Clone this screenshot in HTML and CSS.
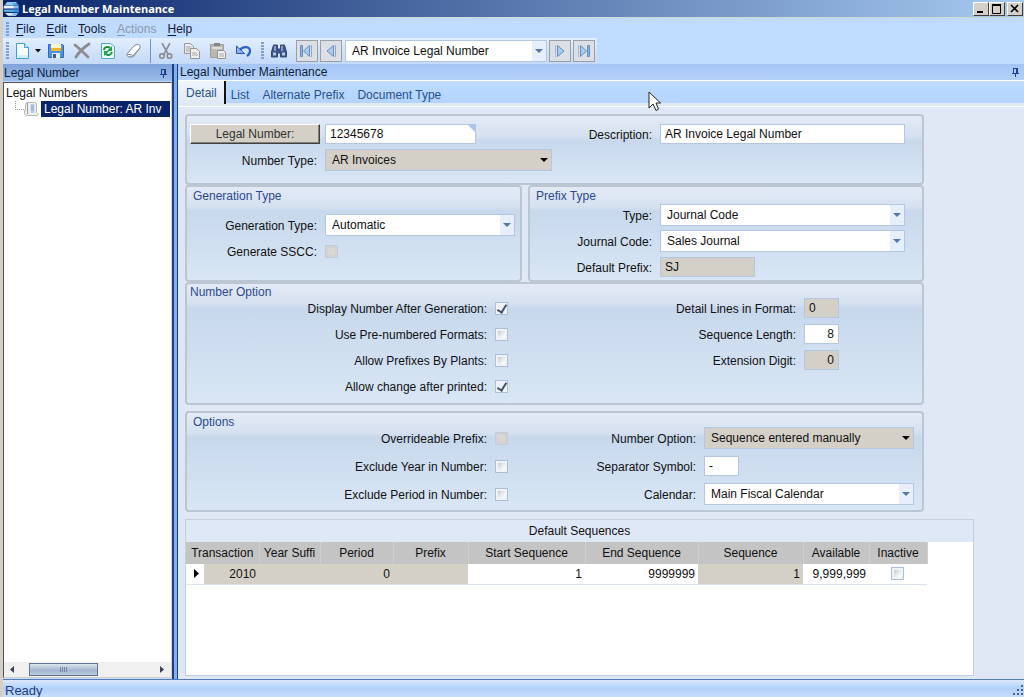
FILE: index.html
```html
<!DOCTYPE html>
<html lang="en">
<head>
<meta charset="utf-8">
<title>Legal Number Maintenance</title>
<link rel="stylesheet" href="styles.css">
</head>
<body>
<div class="window">
  <header class="titlebar">
    <svg class="logo" width="17" height="16" viewBox="0 0 17 16"><path d="M4 1h9l2 3H2z" fill="#8fd0f5"/><path d="M1 4.500h14.500v3H.500z" fill="#e4f5ff"/><path d="M.500 8.500h15.500v2.500H1z" fill="#57a8e4"/><path d="M2 12h13l-2 2.800H5z" fill="#d6f0ff"/><path d="M9 2h5l2 2v8l-2 2H9q4-6 0-12z" fill="#1f78cc" opacity=".45"/></svg>
    <h1>Legal Number Maintenance</h1>
    <div class="winbtns">
      <button type="button" aria-label="Minimize"><svg width="12" height="10"><path d="M2 8h6" stroke="#000" stroke-width="2"/></svg></button>
      <button type="button" aria-label="Maximize"><svg width="12" height="10"><path d="M1.500 1v8.500h8V1" fill="none" stroke="#000"/><path d="M1 1h9" stroke="#000" stroke-width="2"/></svg></button>
      <button type="button" class="close" aria-label="Close"><svg width="12" height="10"><path d="M2 1l7 7M9 1l-7 7" stroke="#000" stroke-width="1.600"/></svg></button>
    </div>
  </header>

  <nav class="menubar">
    <span class="grip"></span>
    <button type="button"><u>F</u>ile</button>
    <button type="button"><u>E</u>dit</button>
    <button type="button"><u>T</u>ools</button>
    <button type="button" disabled><u>A</u>ctions</button>
    <button type="button"><u>H</u>elp</button>
  </nav>

  <div class="toolrow">
    <div class="toolbar">
      <span class="grip"></span>
      <button type="button" class="tool" aria-label="New"><svg width="18" height="18"><path d="M3.500 1.500h8l4 4v11h-12z" fill="#f4fcff" stroke="#3aa0d8"/><path d="M11.500 1.500v4h4" fill="#c5e9f8" stroke="#3aa0d8"/><path d="M4.500 13h10v3h-10z" fill="#cdeefa"/></svg></button>
      <button type="button" class="drop" aria-label="New options"><svg width="6" height="4"><path d="M0 0h6L3 3.500z"/></svg></button>
      <button type="button" class="tool" aria-label="Save"><svg width="18" height="18"><path d="M1.500 2.500h14l1 1v12h-15z" fill="#4a93ea" stroke="#2f68bd"/><path d="M4 2h10v5H4z" fill="#fff4c4"/><path d="M4 6h10v3H4z" fill="#f2b52d"/><path d="M5 11h8v5H5z" fill="#e8edf5"/><path d="M6 12h3v4H6z" fill="#2e5db0"/></svg></button>
      <button type="button" class="tool gap" aria-label="Delete"><svg width="18" height="18"><path d="M2 3c5 4 9 8 13 12M16 2C10 6 6 10 3 15" fill="none" stroke="#8c8c8c" stroke-width="2.800" stroke-linecap="round"/></svg></button>
      <button type="button" class="tool gap" aria-label="Refresh"><svg width="18" height="18"><path d="M2.500 1.500h9l4 3v12h-13z" fill="#effcf3" stroke="#4aa8c8"/><path d="M5 8c0-3 4-4 6-2M13 10c-1 3-4 4-6 2" fill="none" stroke="#14913a" stroke-width="2"/><path d="M13 4v5H8zM5 14V9h5z" fill="#1ba544"/></svg></button>
      <button type="button" class="tool gap" aria-label="Clear"><svg width="18" height="18"><path d="M2 12L9 4q2-2 4.500-1.500Q16 3 15 6l-7 8q-1.500 1.500-4 1T2 12z" fill="#fff" stroke="#7d8590"/><path d="M3 12.500q4-1 5 1.500l7-8" fill="none" stroke="#7d8590"/><path d="M4 14.500l4 0 3-3" fill="none" stroke="#9aa3b2" stroke-width="1.500"/></svg></button>
      <span class="sep"></span>
      <button type="button" class="tool" aria-label="Cut"><svg width="18" height="18"><path d="M5 1l6 11M13 1L7 12" stroke="#8b8f96" stroke-width="1.600"/><circle cx="5" cy="14" r="2.300" fill="none" stroke="#888" stroke-width="1.500"/><circle cx="12.500" cy="14" r="2.300" fill="none" stroke="#888" stroke-width="1.500"/></svg></button>
      <button type="button" class="tool gap" aria-label="Copy"><svg width="18" height="18"><path d="M1.500 1.500h6l3 3v7h-9z" fill="#e7e7e7" stroke="#9b9b9b"/><path d="M3 5h5M3 7h5M3 9h5" stroke="#aaa"/><path d="M7.500 6.500h6l3 3v7h-9z" fill="#eee" stroke="#959595"/><path d="M9 11h5M9 13h6" stroke="#aaa"/></svg></button>
      <button type="button" class="tool gap" aria-label="Paste"><svg width="18" height="18"><path d="M1.500 2.500h13v13h-13z" fill="#bcb8b0" stroke="#a29f9a"/><path d="M5 1h6v3H5z" fill="#868686"/><path d="M3 5h10v2H3z" fill="#ddd"/><path d="M8.500 8.500h6l2 2v6h-8z" fill="#eee" stroke="#939393"/><path d="M10 12h5M10 14h5" stroke="#aaa"/></svg></button>
      <button type="button" class="tool gap" aria-label="Undo"><svg width="18" height="18"><path d="M5 8c3-4 10-4 10 1q0 3-3 5" fill="none" stroke="#2d60c4" stroke-width="2.200"/><path d="M1.500 4v7.500h8z" fill="#8db4f0" stroke="#2856b5"/></svg></button>
      <span class="grip second"></span>
      <button type="button" class="tool find" aria-label="Find"><svg width="18" height="18"><path d="M3.500 3h4v4h3V3h4l2 7v5h-6v-4h-3v4h-6v-5z" fill="#3f568d" stroke="#34487f"/><path d="M5 4v5M12 4v5" stroke="#d3def4"/><path d="M3 12h3M12 12h3" stroke="#b8c8e8" stroke-width="3"/></svg></button>
      <button type="button" class="nav" aria-label="First"><svg width="16" height="16"><path d="M1.500 2.500h2v11h-2z" fill="#8fb4dc" stroke="#6a8dbf"/><path d="M10.500 2.500v11L4.500 8z" fill="#a8cdec" stroke="#6a8dbf"/><path d="M12.500 2v12" stroke="#8aa7d0"/></svg></button>
      <button type="button" class="nav" aria-label="Previous"><svg width="16" height="16"><path d="M10.500 2.500v11L4 8z" fill="#a8cdec" stroke="#6a8dbf"/><path d="M12.500 2v12" stroke="#8aa7d0"/></svg></button>
      <label class="select jump"><select aria-label="Record"><option>AR Invoice Legal Number</option></select></label>
      <button type="button" class="nav" aria-label="Next"><svg width="16" height="16"><path d="M5.500 2.500v11L12 8z" fill="#a8cdec" stroke="#6a8dbf"/><path d="M3.500 2v12" stroke="#a3b8d5"/></svg></button>
      <button type="button" class="nav" aria-label="Last"><svg width="16" height="16"><path d="M4.500 2.500v11L10.500 8z" fill="#a8cdec" stroke="#6a8dbf"/><path d="M2.500 2v12" stroke="#a3b8d5"/><path d="M11.500 2.500h2v11h-2z" fill="#8fb4dc" stroke="#6a8dbf"/></svg></button>
    </div>
  </div>

  <div class="main">
    <aside class="side">
      <div class="panelhead"><h2>Legal Number</h2><svg class="pin" width="9" height="10"><path d="M2.500 1v5M6.500 1v5M2 1.500h5M1 6.500h7M4.500 7v3" stroke="#1d4489" fill="none"/><path d="M5.500 1v5" stroke="#1d4489"/></svg></div>
      <div class="tree">
        <ul>
          <li>Legal Numbers
            <ul>
              <li><svg width="27" height="16"><path d="M3.500 0v8.500H12" fill="none" stroke="#999" stroke-dasharray="1 1"/><path d="M13.500 3.500q0-2 2-2h7q2 0 2 2v8l2 2-1 1h-10q-3 0-3-2v-3h1z" fill="#f2f2f2" stroke="#b5b5b5"/><path d="M15.500 2v11" stroke="#999"/><path d="M18.500 3h4v9h-4z" fill="#c2d2ea"/><path d="M19 5h3M19 7h3M19 9h3" stroke="#8aa3cc"/></svg><span class="picked">Legal Number: AR Inv</span></li>
            </ul>
          </li>
        </ul>
        <div class="hscroll">
          <svg width="18" height="15"><path d="M11 4v7L7 7.500z" fill="#3a4458"/></svg>
          <span class="track"><span class="thumb"></span></span>
          <svg width="18" height="15"><path d="M7 4v7l4-3.500z" fill="#3a4458"/></svg>
        </div>
      </div>
    </aside>
    <div class="splitter"></div>

    <main class="detail">
      <div class="panelhead light"><h2>Legal Number Maintenance</h2><svg class="pin" width="9" height="10"><path d="M2.500 1v5M6.500 1v5M2 1.500h5M1 6.500h7M4.500 7v3" stroke="#1d4489" fill="none"/><path d="M5.500 1v5" stroke="#1d4489"/></svg></div>
      <nav class="tabs">
        <button type="button" class="on">Detail</button>
        <button type="button">List</button>
        <button type="button">Alternate Prefix</button>
        <button type="button">Document Type</button>
      </nav>
      <div class="sheet">
        <form class="forms">
          <section class="group">
            <div class="fields f-head">
              <button type="button" class="raised">Legal Number:</button>
              <span class="corner"><input type="text" value="12345678" aria-label="Legal Number"></span>
              <label for="desc">Description:</label>
              <input id="desc" type="text" value="AR Invoice Legal Number">
              <label for="ntype">Number Type:</label>
              <span class="select off"><select id="ntype" disabled><option>AR Invoices</option></select></span>
            </div>
          </section>
          <div class="pair">
            <section class="group">
              <h3>Generation Type</h3>
              <div class="fields f-gen">
                <label for="gtype">Generation Type:</label>
                <span class="select"><select id="gtype"><option>Automatic</option></select></span>
                <label for="sscc">Generate SSCC:</label>
                <input id="sscc" type="checkbox" disabled>
              </div>
            </section>
            <section class="group">
              <h3>Prefix Type</h3>
              <div class="fields f-prefix">
                <label for="ptype">Type:</label>
                <span class="select"><select id="ptype"><option>Journal Code</option></select></span>
                <label for="jcode">Journal Code:</label>
                <span class="select"><select id="jcode"><option>Sales Journal</option></select></span>
                <label for="dpre">Default Prefix:</label>
                <input id="dpre" class="mid" type="text" value="SJ" disabled>
              </div>
            </section>
          </div>
          <section class="group">
            <h3 class="near">Number Option</h3>
            <div class="fields f-number">
              <label for="c1">Display Number After Generation:</label><input id="c1" type="checkbox" checked>
              <label for="n1">Detail Lines in Format:</label><input id="n1" type="text" value="0" disabled>
              <label for="c2">Use Pre-numbered Formats:</label><input id="c2" type="checkbox">
              <label for="n2">Sequence Length:</label><input id="n2" class="num" type="text" value="8">
              <label for="c3">Allow Prefixes By Plants:</label><input id="c3" type="checkbox">
              <label for="n3">Extension Digit:</label><input id="n3" class="num" type="text" value="0" disabled>
              <label for="c4">Allow change after printed:</label><input id="c4" type="checkbox" checked>
            </div>
          </section>
          <section class="group last">
            <h3>Options</h3>
            <div class="fields f-options">
              <label for="o1">Overrideable Prefix:</label><input id="o1" type="checkbox" disabled>
              <label for="s1">Number Option:</label><span class="select off"><select id="s1" disabled><option>Sequence entered manually</option></select></span>
              <label for="o2">Exclude Year in Number:</label><input id="o2" type="checkbox">
              <label for="s2">Separator Symbol:</label><input id="s2" class="tiny" type="text" value="-">
              <label for="o3">Exclude Period in Number:</label><input id="o3" type="checkbox">
              <label for="s3">Calendar:</label><span class="select"><select id="s3"><option>Main Fiscal Calendar</option></select></span>
            </div>
          </section>
        </form>
        <section class="gridbox">
          <h3>Default Sequences</h3>
          <table>
            <colgroup><col class="w-sel"><col class="w-tran"><col class="w-year"><col class="w-per"><col class="w-pre"><col class="w-start"><col class="w-end"><col class="w-seq"><col class="w-av"><col class="w-in"></colgroup>
            <thead><tr><th colspan="2">Transaction</th><th>Year Suffi</th><th>Period</th><th>Prefix</th><th>Start Sequence</th><th>End Sequence</th><th>Sequence</th><th>Available</th><th>Inactive</th></tr></thead>
            <tbody><tr><td class="sel"><svg width="5" height="9"><path d="M0 0v9l5-4.500z"/></svg></td><td class="ro">2010</td><td class="ro"></td><td class="ro">0</td><td class="ro"></td><td>1</td><td>9999999</td><td class="ro">1</td><td>9,999,999</td><td class="mark"><input type="checkbox" aria-label="Inactive"></td></tr></tbody>
          </table>
        </section>
      </div>
    </main>
  </div>

  <footer class="status"><span>Ready</span><svg width="11" height="11"><path d="M8 0h2v2H8zM8 4h2v2H8zM4 4h2v2H4zM8 8h2v2H8zM4 8h2v2H4zM0 8h2v2H0z" fill="#4a648e"/></svg></footer>
  <svg class="cursor" width="13" height="21"><path d="M1 1v16l4-4 3 6.500 2.500-1.300L8 12h4.500z" fill="#fff" stroke="#222"/></svg>
</div>
</body>
</html>
```
FILE: styles.css
```css
* { box-sizing: border-box; }
body { margin: 0; font: 12px/16px "Liberation Sans", Arial, sans-serif; color: #111; }
h1, h2, h3, ul { margin: 0; padding: 0; font-size: 12px; font-weight: normal; list-style: none; }
button, input, select { font: inherit; color: inherit; margin: 0; padding: 0; border: 0; border-radius: 0; }
button { background: none; }
svg { display: block; flex: none; }

.window { position: relative; display: flex; flex-direction: column; height: 100vh; border-left: 3px solid #d4d0c8; background: #bfdbff; overflow: hidden; }

.titlebar { display: flex; align-items: center; height: 17px; flex: none; padding-right: 1px; background: linear-gradient(90deg, #0a246a, #a6caf0); color: #fff; }
.titlebar h1 { flex: 1; padding-left: 2px; font: bold 11px/16px "Open Sans", sans-serif; }
.winbtns { display: flex; }
.winbtns button { display: flex; align-items: center; justify-content: center; width: 16px; height: 14px; background: #d4d0c8; border: 1px solid; border-color: #fff #404040 #404040 #fff; }
.winbtns .close { margin-left: 2px; }

.menubar { display: flex; align-items: center; gap: 1px; height: 21px; flex: none; padding: 2px 0 0 3px; border-top: 1px solid #d4d6d8; }
.menubar button { padding: 0 5px; color: #10183a; }
.menubar .grip + button { margin-left: 1px; }
.menubar button:disabled { color: #8d97a8; }
u { text-underline-offset: 2px; }
.grip { width: 3px; height: 14px; flex: none; background: repeating-linear-gradient(#6f8fbe 0 2px, transparent 2px 3px); opacity: .8; }

.toolrow { height: 26px; flex: none; display: flex; }
.toolbar { display: flex; align-items: center; padding-left: 3px; background: linear-gradient(#e3efff, #cfe1f9 60%, #c3daf8); }
.toolbar .grip { height: 18px; }
.tool { width: 18px; height: 18px; flex: none; }
.tool.gap { margin-left: 8px; }
.grip + .tool { margin-left: 4px; }
.drop { margin: 0 6px 0 4px; }
.sep { width: 1px; height: 24px; margin: 0 6px 0 7px; background: #6f93c5; }
.toolbar .second { margin-left: 8px; }
.grip + .find { margin: 0 8px 0 6px; }
.nav { display: flex; align-items: center; justify-content: center; width: 22px; height: 22px; margin-right: 2px; background: #dcdfe5; border: 1px solid #9b9ea4; }
.jump { width: 202px; margin: 0 2px 0 1px; }

.main { display: flex; flex: 1; min-height: 0; }
.side { display: flex; flex-direction: column; width: 169px; flex: none; }
.panelhead { display: flex; align-items: center; height: 17px; flex: none; padding: 0 4px 0 1px; background: linear-gradient(#7fa3da, #9bbce9); }
.panelhead h2 { flex: 1; color: #0c1c3c; }
.panelhead.light { padding: 0 4px 0 2px; background: linear-gradient(#a6c5f5, #b3d0f8); border-bottom: 1px solid #fff; }
.tree { display: flex; flex-direction: column; justify-content: space-between; flex: 1; margin: 1px 0 1px; background: #fff; border: 1px solid #55524d; border-right-color: #d4d0c8; border-bottom-color: #d4d0c8; overflow: hidden; }
.tree > ul { padding: 2px 1px 2px 2px; white-space: nowrap; }
.tree li li { display: flex; padding-left: 7px; }
.picked { margin-left: 2px; padding: 0 3px; flex: 1; background: #0a246a; color: #fff; overflow: hidden; line-height: 17px; height: 16px; }
.tree svg { margin-left: -1px; }
.hscroll { display: flex; height: 15px; background: #f0f0f0; }
.track { flex: 1; padding: 1px 0; }
.thumb { display: block; width: 52%; height: 13px; margin-left: 6%; border: 1px solid #5f7590; background: repeating-linear-gradient(90deg, #7787a1 0 1px, transparent 1px 2px) center / 8px 5px no-repeat, linear-gradient(#dbe4f0, #a4b5cd 60%, #bccbe0); }
.splitter { width: 6px; flex: none; background: #86aee8; border: solid #17428b; border-width: 0 1px 0 2px; }

.detail { display: flex; flex-direction: column; flex: 1; min-width: 0; }
.tabs { display: flex; height: 26px; flex: none; padding-bottom: 3px; background: linear-gradient(#c0dbff, #b3d4fd 22px, #dfe8f4 22px); border-bottom: 1px solid #fff; }
.tabs button { padding: 6px 6px 0 7px; color: #28508f; }
.tabs .on { height: 23px; padding: 1px 7px 1px 8px; margin-right: -2px; background: linear-gradient(#f0f6ff, #dfe8f4); border-right: 2px solid #111; }

.sheet { display: flex; flex-direction: column; flex: 1; padding: 7px 50px 3px 7px; background: #dfe8f4; }
.forms { display: flex; flex-direction: column; margin-right: 50px; }
.group { border: 2px solid #bac6d1; border-radius: 4px; background: linear-gradient(#e3eaf5, #d5e1f0 20px, #c8d8ec 24px, #d8e6f5); }
.group h3 { height: 16px; margin-bottom: -6px; padding: 1px 6px 0; color: #2c4a92; }
.group .near { padding: 0 3px; }
.pair { display: grid; grid-template-columns: 337fr 396fr; gap: 6px; }
.group.last { margin-top: 6px; }

.fields { display: grid; grid-auto-rows: 26px; align-items: center; column-gap: 5px; padding-left: 3px; }
.fields label { text-align: right; padding: 2px 3px 0 0; white-space: nowrap; }
.f-head { grid-template-columns: 130px 227px 98px 1fr; padding: 5px 17px 10px 3px; }
.f-gen { grid-template-columns: 130px 1fr; padding: 15px 5px 15px 3px; }
.f-prefix { grid-template-columns: 125px 1fr; padding: 5px 17px 0 0; }
.f-number { grid-template-columns: 300px 13px 1fr 35px; padding: 1px 83px 4px 3px; }
.f-options { grid-template-columns: 300px 13px 1fr 210px; grid-auto-rows: 28px; padding: 1px 8px 2px 3px; }

input[type="text"] { width: 100%; height: 20px; padding: 0 4px; background: #fff; border: 1px solid #b3c7e1; }
input[type="text"]:disabled { background: #d4d0c8; color: #111; }
input.num { text-align: right; }
input.mid { width: 95px; }
input.tiny { width: 35px; }
.corner { position: relative; width: 151px; }
.corner input { display: block; }
.corner::after { content: ""; position: absolute; top: 0; right: 0; border: solid transparent; border-width: 0 0 9px 9px; border-top: 9px solid #abc6ea; border-bottom: 0; }

.select { position: relative; display: block; height: 22px; background: #fff; border: 1px solid #b3c7e1; }
.select select { display: block; width: 100%; height: 20px; padding-left: 6px; appearance: none; background: linear-gradient(90deg, transparent calc(100% - 14px), #e6effb calc(100% - 14px)); color: #111; opacity: 1; }
.select::after { content: ""; position: absolute; top: 8px; right: 3px; border: 4px solid transparent; border-top-color: #5379ac; border-bottom: 0; pointer-events: none; }
.select.off { background: #d4d0c8; }
.select.off select { background: none; }
.select.off::after { border-top-color: #000; }

input[type="checkbox"] { appearance: none; position: relative; display: block; width: 13px; height: 13px; margin: 0; border: 1px solid #abbfd7; background: linear-gradient(135deg, #b4b9c2, #fafafa 70%); outline: 2px solid #eff3f8; outline-offset: -3px; }
input[type="checkbox"]:checked { background: #eef2f8; }
input[type="checkbox"]:checked::after { content: ""; position: absolute; left: 3px; top: 0; width: 4px; height: 8px; border: solid #45536c; border-width: 0 2px 2px 0; transform: rotate(32deg); }
input[type="checkbox"]:disabled { background: #dcd6d0; border-color: #c5ccd6; outline-color: #d0d2d6; }

.raised { height: 20px; background: #d4d0c8; border: 1px solid; border-color: #fff #404040 #404040 #fff; box-shadow: inset -1px -1px #808080; color: #333; }

.gridbox { flex: 1; margin-top: 7px; background: #fff; border: 1px solid #c5cfdb; }
.gridbox h3 { height: 22px; line-height: 23px; text-align: center; background: #dfe8f6; }
table { table-layout: fixed; border-collapse: collapse; width: 741px; }
.w-sel { width: 18px; } .w-tran { width: 55px; } .w-year { width: 61px; } .w-per { width: 73px; } .w-pre { width: 75px; }
.w-start { width: 117px; } .w-end { width: 113px; } .w-seq { width: 105px; } .w-av { width: 66px; } .w-in { width: 58px; }
th { height: 22px; padding: 0; font-weight: normal; background: #c4c4c4; border-right: 1px solid #cfcfcf; white-space: nowrap; }
td { height: 20px; padding: 0 3px 0 0; text-align: right; border: solid #dbe4ef; border-width: 0 0 1px; }
.ro { background: #d4d0c8; }
.sel svg { margin-left: 8px; }
.mark input { margin-left: 22px; }

.status { display: flex; align-items: center; justify-content: space-between; height: 18px; flex: none; padding: 4px 0 0 2px; border-top: 1px solid #567db1; background: linear-gradient(#d9e8fc, #b3d1fa 50%, #c8dffc); font-size: 13px; color: #1f3a86; }
.cursor { position: absolute; left: 645px; top: 91px; pointer-events: none; }
```
